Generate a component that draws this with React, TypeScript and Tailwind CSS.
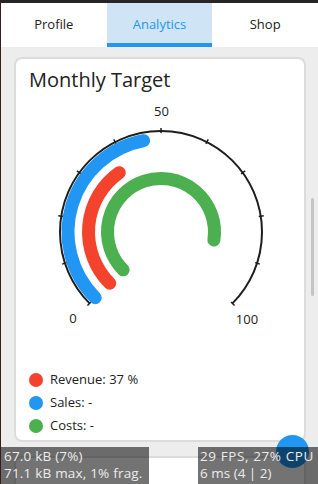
import React from "react";

const CX = 145;
const CY = 132;

const toAngle = (v: number) => 135 + 2.7 * v;

const pt = (r: number, deg: number) => {
  const a = (deg * Math.PI) / 180;
  return [CX + r * Math.cos(a), CY + r * Math.sin(a)];
};

const arcPath = (r: number, from: number, to: number) => {
  const a0 = toAngle(from);
  const a1 = toAngle(to);
  const [x0, y0] = pt(r, a0);
  const [x1, y1] = pt(r, a1);
  const large = a1 - a0 > 180 ? 1 : 0;
  return `M ${x0} ${y0} A ${r} ${r} 0 ${large} 1 ${x1} ${y1}`;
};

const series = [
  { label: "Revenue: 37 %", color: "bg-[#f4432c]" },
  { label: "Sales: -", color: "bg-[#2196f3]" },
  { label: "Costs: -", color: "bg-[#4caf50]" },
];

function Gauge() {
  const ticks = Array.from({ length: 11 }, (_, i) => i * 10);
  return (
    <svg width="288" height="230" viewBox="0 0 288 230" className="block">
      {/* scale */}
      <path d={arcPath(101, 0, 100)} fill="none" stroke="#1e1e1e" strokeWidth={2} />
      {ticks.map((t) => {
        const a = toAngle(t);
        const [x0, y0] = pt(99, a);
        const [x1, y1] = pt(104, a);
        return <line key={t} x1={x0} y1={y0} x2={x1} y2={y1} stroke="#1e1e1e" strokeWidth={1.5} />;
      })}

      {/* indicators */}
      <path d={arcPath(93, 0, 46)} fill="none" stroke="#2196f3" strokeWidth={13} strokeLinecap="round" />
      <path d={arcPath(72.5, 0, 37)} fill="none" stroke="#f4432c" strokeWidth={13} strokeLinecap="round" />
      <path d={arcPath(53.5, 0, 86.5)} fill="none" stroke="#4caf50" strokeWidth={13} strokeLinecap="round" />

      <text x="145.5" y="16" textAnchor="middle" fontSize="13" fill="#222">50</text>
      <text x="57" y="223" textAnchor="middle" fontSize="13" fill="#222">0</text>
      <text x="231" y="224" textAnchor="middle" fontSize="13" fill="#222">100</text>
    </svg>
  );
}

export default function App() {
  return (
    <div
      className="relative w-[318px] h-[484px] overflow-hidden bg-[#ededed] border-l border-[#3a1c1c] text-[#222]"
      style={{ fontFamily: '"Open Sans", "DejaVu Sans", sans-serif' }}
    >
      <div className="h-[3px] bg-[#262626]" />

      {/* Tabs */}
      <div className="grid grid-cols-3 h-[44px] bg-white text-[13px]">
        <div className="flex items-center justify-center">Profile</div>
        <div className="flex items-center justify-center bg-[#cfe5f5] border-b-4 border-[#2196f3] text-[#2196f3] pt-1">
          Analytics
        </div>
        <div className="flex items-center justify-center">Shop</div>
      </div>

      {/* Content */}
      <div className="pl-[13px] pt-[10px] w-[305px]">
        <div className="rounded-lg border-2 border-[#dcdcdc] bg-white">
          <div className="pt-[7px] pl-[13px] text-[20px] leading-[28px]">Monthly Target</div>
          <div className="mt-[6px]">
            <Gauge />
          </div>
          <div className="mt-[38px] pb-[3px] pl-[13px] text-[13px]">
            {series.map((s) => (
              <div key={s.label} className="flex items-center h-[23px] gap-[7px]">
                <span className={`w-[14px] h-[14px] rounded-full ${s.color}`} />
                <span>{s.label}</span>
              </div>
            ))}
          </div>
        </div>

        {/* next card, mostly below the fold */}
        <div className="mt-[14px] rounded-lg border-2 border-[#dcdcdc] bg-white h-[120px]" />
      </div>

      {/* scrollbar */}
      <div className="absolute right-[4px] top-[198px] w-[3px] h-[98px] rounded-sm bg-[#c4c4c4]" />

      {/* floating button */}
      <div className="absolute left-[275px] top-[435px] w-[33px] h-[33px] rounded-full bg-[#2196f3]" />

      {/* perf monitors */}
      <div className="absolute left-0 bottom-0 w-[148px] h-[37px] bg-black/55 text-[#ececec] text-[13.5px] leading-[17px] pl-[3px] pt-[1px] whitespace-nowrap">
        <div className="tracking-[0.2px]">67.0 kB (7%)</div>
        <div className="tracking-[0.2px]">71.1 kB max, 1% frag.</div>
      </div>
      <div className="absolute left-[197px] right-0 bottom-0 h-[37px] bg-black/55 text-[#ececec] text-[13.5px] leading-[17px] pl-[2px] pt-[1px] whitespace-nowrap">
        <div className="tracking-[0.6px]">29 FPS, 27% CPU</div>
        <div>6 ms (4 | 2)</div>
      </div>
    </div>
  );
}
